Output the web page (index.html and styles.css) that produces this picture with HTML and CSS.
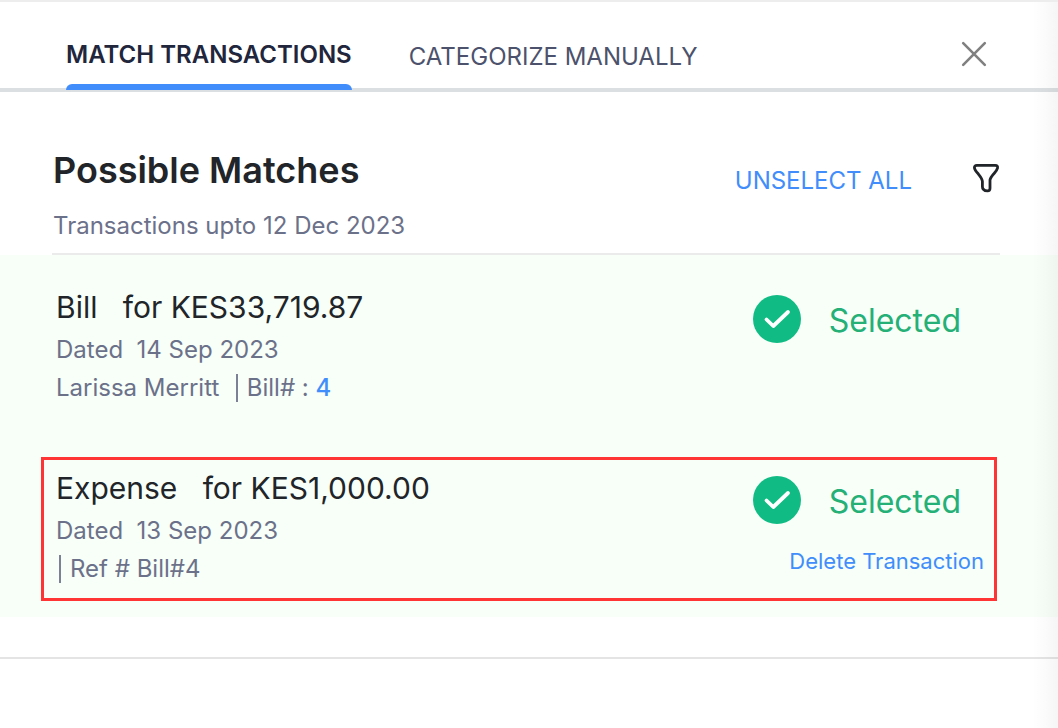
FILE: index.html
```html
<!DOCTYPE html>
<html lang="en">
<head>
<meta charset="utf-8">
<title>Match Transactions</title>
<link rel="stylesheet" href="styles.css">
</head>
<body>
<div class="panel">
  <header class="topbar">
    <nav class="tabs">
      <button class="tab tab-active" type="button">MATCH TRANSACTIONS</button>
      <button class="tab" type="button">CATEGORIZE MANUALLY</button>
    </nav>
    <button class="icon-button close" type="button" aria-label="Close">
      <svg width="26" height="26" viewBox="0 0 26 26" fill="none" stroke="#808080" stroke-width="2.6" stroke-linecap="round"><path d="M2.2 2.2l21.6 21.6M23.8 2.2L2.2 23.8"/></svg>
    </button>
  </header>
  <section class="intro">
    <div class="intro-text">
      <h1 class="title">Possible Matches</h1>
      <p class="subtitle">Transactions upto 12 Dec 2023</p>
    </div>
    <div class="intro-actions">
      <button class="link-button unselect" type="button">UNSELECT ALL</button>
      <button class="icon-button" type="button" aria-label="Filter">
        <svg width="28" height="30" viewBox="0 0 28 30" fill="none" stroke="#212529" stroke-width="2.8" stroke-linejoin="round"><path d="M4.800 2.400H23.200Q26.200 2.400 25.500 5.200Q25 7.200 22.300 10.200Q18.300 14.500 18 17V25.200Q18 27.900 15.600 27.900Q12.800 27.900 11.300 26.200Q10.400 25.200 10.400 23.500V18.500Q10.400 16 6.200 10.800Q2.600 7 2.400 4.700Q2.400 2.400 4.800 2.400Z"/></svg>
      </button>
    </div>
  </section>
  <main class="matches">
    <article class="match">
      <div class="details">
        <h2 class="amount">Bill &nbsp; for KES33,719.87</h2>
        <p class="meta">Dated &nbsp;14 Sep 2023</p>
        <p class="meta">Larissa Merritt &nbsp;<span class="bar"></span>Bill# : <a class="link" href="#bill">4</a></p>
      </div>
      <div class="status">
        <div class="selected">
          <svg width="48" height="48" viewBox="0 0 48 48" aria-hidden="true"><circle cx="24" cy="24" r="24" fill="#10bc83"/><path d="M13.500 24.500L20.300 31L35 17" fill="none" stroke="#fff" stroke-width="3.800" stroke-linecap="round" stroke-linejoin="round"/></svg>
          <span class="selected-label">Selected</span>
        </div>
      </div>
    </article>
    <article class="match match-outlined">
      <div class="details">
        <h2 class="amount">Expense &nbsp; for KES1,000.00</h2>
        <p class="meta">Dated &nbsp;13 Sep 2023</p>
        <p class="meta"><span class="bar bar-first"></span>Ref # Bill#4</p>
      </div>
      <div class="status">
        <div class="selected">
          <svg width="48" height="48" viewBox="0 0 48 48" aria-hidden="true"><circle cx="24" cy="24" r="24" fill="#10bc83"/><path d="M13.500 24.500L20.300 31L35 17" fill="none" stroke="#fff" stroke-width="3.800" stroke-linecap="round" stroke-linejoin="round"/></svg>
          <span class="selected-label">Selected</span>
        </div>
        <button class="link-button link-small" type="button">Delete Transaction</button>
      </div>
    </article>
  </main>
  <footer class="footer"></footer>
  <div class="edge-shade"></div>
</div>
</body>
</html>
```
FILE: styles.css
```css
* {
  box-sizing: border-box;
}

body {
  margin: 0;
  background: #fff;
  color: #212529;
  font-family: Inter, "Liberation Sans", sans-serif;
  font-size: 24px;
}

h1, h2, p {
  margin: 0;
}

button {
  padding: 0;
  border: 0;
  background: none;
  font: inherit;
  cursor: pointer;
}

.panel {
  position: relative;
  min-height: 100vh;
  border-top: 2px solid #ededed;
}

.topbar {
  display: flex;
  justify-content: space-between;
  align-items: center;
  height: 90px;
  padding: 0 71px 0 66px;
  border-bottom: 4px solid #dcdfe1;
}

.tabs {
  display: flex;
  gap: 57px;
  align-self: stretch;
}

.tab {
  height: 88px;
  padding-top: 22px;
  color: #4c526c;
  line-height: 66px;
  white-space: nowrap;
}

.tab-active {
  position: relative;
  padding-top: 18px;
  padding-bottom: 0;
  color: #21263c;
  font-weight: 600;
}

.tab-active::after {
  content: "";
  position: absolute;
  left: 0;
  right: 0;
  bottom: 0;
  height: 6px;
  border-radius: 6px 6px 0 0;
  background: #408dfb;
}

.icon-button {
  display: flex;
}

.close {
  margin-top: 18px;
}

.intro {
  display: flex;
  justify-content: space-between;
  margin: 0 58px 0 52px;
  padding: 52px 0 10px;
  border-bottom: 2px solid #ebebeb;
}

.intro-text {
  padding-left: 1px;
}

.title {
  font-size: 36px;
  font-weight: 600;
  line-height: 52px;
}

.subtitle {
  margin-top: 12px;
  color: #6c718a;
  line-height: 35px;
}

.intro-actions {
  display: flex;
  align-items: center;
  gap: 60px;
  height: 68px;
}

.unselect {
  padding-top: 4px;
}

.link-button,
.link {
  color: #408dfb;
  text-decoration: none;
}

.link {
  font-weight: 500;
}

.matches {
  padding: 20px 61px 16px 41px;
  background: #f7fff8;
}

.match {
  display: flex;
  justify-content: space-between;
  padding: 9px 10px 9px 12px;
  border: 3px solid transparent;
}

.match + .match {
  margin-top: 38px;
}

.match-outlined {
  padding-top: 8px;
  padding-bottom: 10px;
  border-color: #ff3535;
}

.amount {
  margin-bottom: 4px;
  font-size: 30px;
  font-weight: 400;
  line-height: 40px;
}

.meta {
  display: flex;
  align-items: center;
  color: #6c718a;
  line-height: 38px;
  white-space: pre;
}

.bar {
  width: 2px;
  height: 28px;
  margin: 0 9px 0 3px;
  background: #7c8196;
}

.status {
  display: flex;
  flex-direction: column;
  align-items: flex-end;
  padding-top: 8px;
}

.selected {
  display: flex;
  align-items: center;
  gap: 28px;
  margin-right: 23px;
  color: #24b076;
  font-size: 32px;
}

.selected-label {
  padding-top: 4px;
  line-height: 44px;
}

.link-small {
  margin-top: 20px;
  font-size: 22px;
  line-height: 34px;
}

.footer {
  margin-top: 40px;
  border-top: 2px solid #e4e4e4;
}

.edge-shade {
  position: absolute;
  top: 0;
  right: 0;
  bottom: 0;
  width: 26px;
  background: linear-gradient(to right, rgba(0, 0, 0, 0), rgba(0, 0, 0, 0.015) 50%, rgba(0, 0, 0, 0.04));
  pointer-events: none;
}
```
